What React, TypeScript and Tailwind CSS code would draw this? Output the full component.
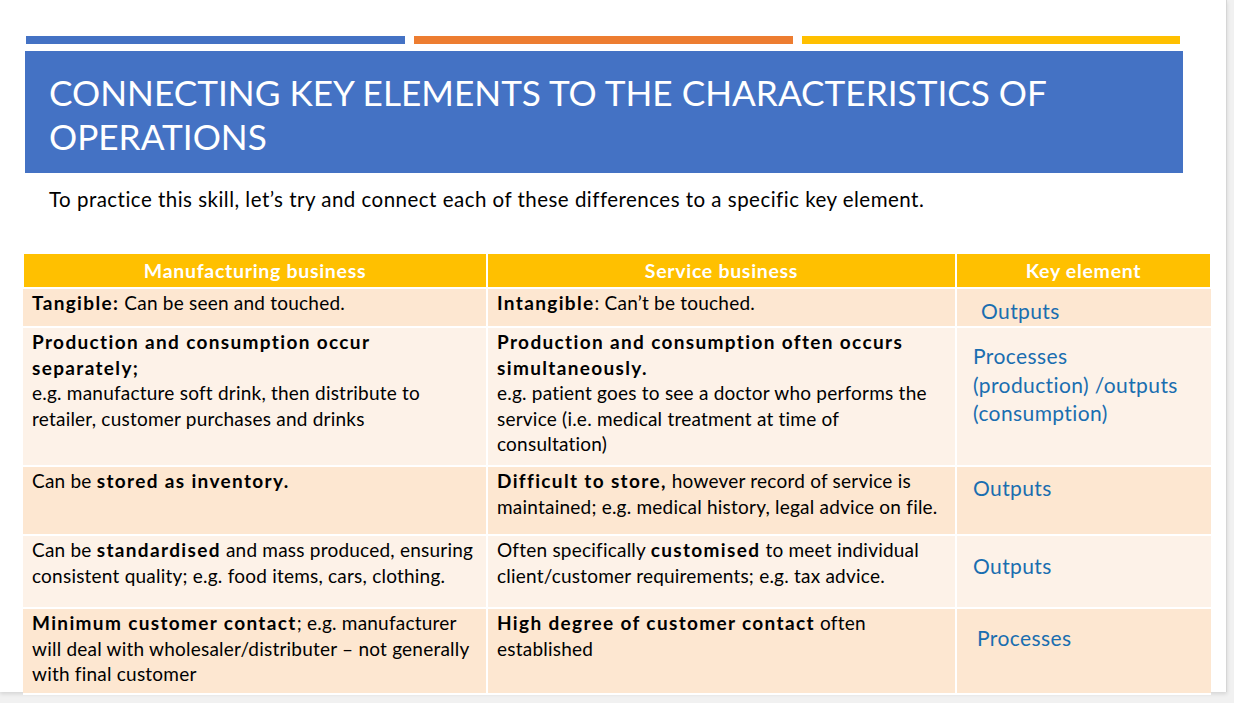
import React from "react";

type Row = {
  manufacturing: React.ReactNode;
  service: React.ReactNode;
  key: React.ReactNode;
  keyPad: string;
  bg: string;
  height: string;
};

const B = ({ children }: { children: React.ReactNode }) => (
  <b className="font-bold tracking-[1.35px]">{children}</b>
);

const rows: Row[] = [
  {
    manufacturing: (
      <>
        <B>Tangible:</B> Can be seen and touched.
      </>
    ),
    service: (
      <>
        <B>Intangible</B>: Can’t be touched.
      </>
    ),
    key: "Outputs",
    keyPad: "pl-[24px] pt-[8px] leading-[27px]",
    bg: "bg-[#fde7d1]",
    height: "h-[39px]",
  },
  {
    manufacturing: (
      <>
        <B>Production and consumption occur</B>
        <br />
        <B>separately;</B>
        <br />
        e.g. manufacture soft drink, then distribute to
        <br />
        retailer, customer purchases and drinks
      </>
    ),
    service: (
      <>
        <B>Production and consumption often occurs</B>
        <br />
        <B>simultaneously.</B>
        <br />
        e.g. patient goes to see a doctor who performs the
        <br />
        service (i.e. medical treatment at time of
        <br />
        consultation)
      </>
    ),
    key: (
      <>
        Processes
        <br />
        (production) /outputs
        <br />
        (consumption)
      </>
    ),
    keyPad: "pl-[16px] pt-[14px] leading-[28.5px]",
    bg: "bg-[#fdf2e8]",
    height: "h-[139px]",
  },
  {
    manufacturing: (
      <>
        Can be <B>stored as inventory.</B>
      </>
    ),
    service: (
      <>
        <B>Difficult to store,</B> however record of service is
        <br />
        maintained; e.g. medical history, legal advice on file.
      </>
    ),
    key: "Outputs",
    keyPad: "pl-[16px] pt-[7px] leading-[28.5px]",
    bg: "bg-[#fde7d1]",
    height: "h-[69px]",
  },
  {
    manufacturing: (
      <>
        Can be <B>standardised</B> and mass produced, ensuring
        <br />
        consistent quality; e.g. food items, cars, clothing.
      </>
    ),
    service: (
      <>
        Often specifically <B>customised</B> to meet individual
        <br />
        client/customer requirements; e.g. tax advice.
      </>
    ),
    key: "Outputs",
    keyPad: "pl-[16px] pt-[16px] leading-[28.5px]",
    bg: "bg-[#fdf2e8]",
    height: "h-[73px]",
  },
  {
    manufacturing: (
      <>
        <B>Minimum customer contact</B>; e.g. manufacturer
        <br />
        will deal with wholesaler/distributer – not generally
        <br />
        with final customer
      </>
    ),
    service: (
      <>
        <B>High degree of customer contact</B> often
        <br />
        established
      </>
    ),
    key: "Processes",
    keyPad: "pl-[20px] pt-[15px] leading-[28.5px]",
    bg: "bg-[#fde7d1]",
    height: "h-[86px]",
  },
];

export default function App() {
  return (
    <div
      className="w-[1234px] h-[703px] overflow-hidden bg-[#f1f1f1] flex"
      style={{ fontFamily: "Lato, 'Open Sans', sans-serif" }}
    >
      <div className="w-[1227px] h-[692px] bg-white border-r border-[#d6d6d6] shadow-[0_2px_4px_rgba(0,0,0,0.12)] shrink-0">
        {/* accent bars */}
        <div className="pt-[36px] pl-[26px] flex gap-[9px]">
          <div className="w-[379px] h-[8px] bg-[#4472c4]" />
          <div className="w-[379px] h-[8px] bg-[#ed7d31]" />
          <div className="w-[378px] h-[8px] bg-[#ffc000]" />
        </div>

        {/* title */}
        <div className="ml-[25px] mt-[7px] w-[1158px] h-[122px] bg-[#4472c4] pl-[24px] pt-[19px]">
          <h1 className="text-white text-[35.2px] leading-[44px] uppercase">
            Connecting key elements to the characteristics of
            <br />
            operations
          </h1>
        </div>

        <p className="ml-[49px] mt-[13px] text-[20.5px] leading-[26px] tracking-[0.48px] text-black">
          To practice this skill, let’s try and connect each of these
          differences to a specific key element.
        </p>

        {/* table */}
        <table className="ml-[22px] mt-[42px] w-[1188px] border-collapse table-fixed text-[19px] leading-[25.5px] tracking-[0.22px] text-black">
          <colgroup>
            <col className="w-[464px]" />
            <col className="w-[469px]" />
            <col className="w-[255px]" />
          </colgroup>
          <thead>
            <tr className="h-[34px] bg-[#ffc000]">
              {["Manufacturing business", "Service business", "Key element"].map(
                (h) => (
                  <th
                    key={h}
                    className="border-2 border-white border-t-0 text-white font-bold text-[19.5px] tracking-[0.7px] text-center align-middle p-0"
                  >
                    {h}
                  </th>
                )
              )}
            </tr>
          </thead>
          <tbody>
            {rows.map((r, i) => (
              <tr key={i} className={`${r.height} ${r.bg}`}>
                <td className="border-2 border-white border-l-0 align-top pl-[9px] pr-0 pt-[1px] whitespace-nowrap">
                  {r.manufacturing}
                </td>
                <td className="border-2 border-white align-top pl-[9px] pr-0 pt-[1px] whitespace-nowrap">
                  {r.service}
                </td>
                <td
                  className={`border-2 border-white border-r-0 align-top text-[#1a6eb0] text-[21px] tracking-[0.4px] whitespace-nowrap ${r.keyPad}`}
                >
                  {r.key}
                </td>
              </tr>
            ))}
          </tbody>
        </table>
      </div>
    </div>
  );
}
